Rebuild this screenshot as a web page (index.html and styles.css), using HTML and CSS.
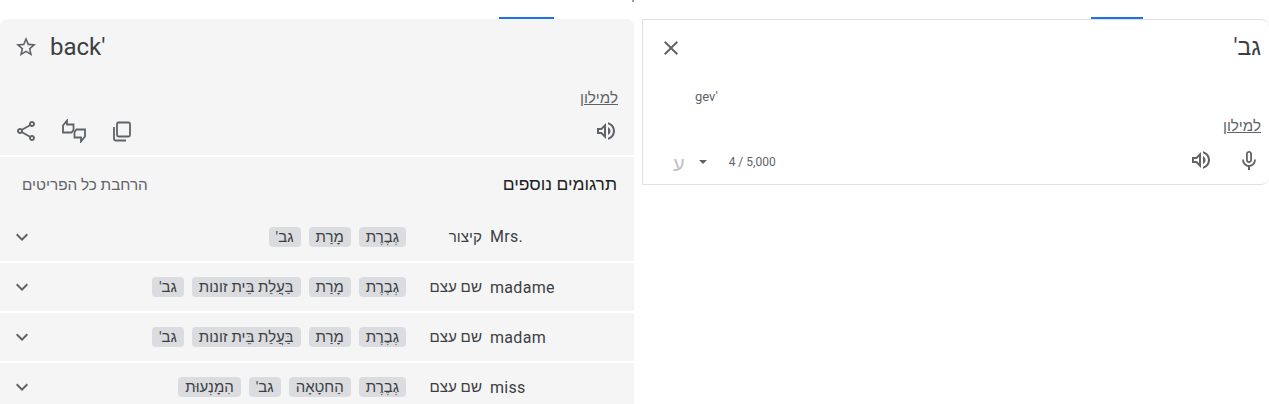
FILE: index.html
```html
<!DOCTYPE html>
<html lang="he" dir="rtl">
<head>
    <meta charset="UTF-8">
    <meta name="viewport" content="width=device-width, initial-scale=1.0">
    <title>Google Translate</title>
    <link rel="stylesheet" href="styles.css">
</head>
<body>
    <span class="top-speck"></span>
    <main class="panels">
        <section class="source">
            <div class="tab-mark"></div>
            <div class="source-card">
                <div class="source-top">
                    <span class="big-text">גב'</span>
                    <svg class="icon close-icon" viewBox="0 0 24 24"><path d="M19 6.41 17.59 5 12 10.59 6.41 5 5 6.41 10.59 12 5 17.59 6.41 19 12 13.41 17.59 19 19 17.59 13.41 12z"/></svg>
                </div>
                <div class="translit">gev'</div>
                <a class="dict-link source-link" href="#">למילון</a>
                <div class="source-tools">
                    <svg class="icon mic" viewBox="0 0 24 24"><path d="M12 15c1.66 0 3-1.31 3-2.97V6c0-1.66-1.34-3-3-3S9 4.34 9 6v6.03C9 13.69 10.34 15 12 15zM10.800 6c0-.66.54-1.200 1.200-1.200s1.200.54 1.200 1.200v6.030c0 .66-.54 1.170-1.200 1.170s-1.200-.51-1.200-1.170V6z"/><path d="M17 11.500v.5c0 2.760-2.240 5-5 5s-5-2.240-5-5v-.5H5.200v.5c0 3.400 2.500 6.200 5.800 6.700V22h2v-3.300c3.300-.5 5.800-3.300 5.800-6.700v-.5z"/></svg>
                    <svg class="icon speaker" viewBox="0 0 24 24"><path d="M3 9v6h4l5 5V4L7 9H3zm7-.17v6.340L7.830 13H5v-2h2.830L10 8.830zM16.500 12c0-1.770-1.020-3.290-2.500-4.030v8.050c1.480-.730 2.500-2.250 2.500-4.020zM14 3.230v2.060c2.890.860 5 3.540 5 6.710s-2.110 5.850-5 6.710v2.060c4.010-.910 7-4.490 7-8.770 0-4.280-2.990-7.860-7-8.770z"/></svg>
                    <span class="count" dir="ltr">4 / 5,000</span>
                    <span class="caret"></span>
                    <span class="keyboard">ע</span>
                </div>
            </div>
        </section>

        <section class="target">
            <div class="tab-mark"></div>
            <div class="result-card">
                <div class="result-top">
                    <span class="big-text" dir="ltr">back'</span>
                    <svg class="icon star" viewBox="0 0 24 24"><path d="m22 9.240-7.190-.620L12 2 9.190 8.630 2 9.240l5.460 4.730L5.820 21 12 17.270 18.180 21l-1.630-7.030L22 9.240zM12 15.400l-3.760 2.270 1-4.280-3.320-2.880 4.380-.380L12 6.100l1.710 4.040 4.380.380-3.320 2.880 1 4.280L12 15.400z"/></svg>
                </div>
                <a class="dict-link result-link" href="#">למילון</a>
                <div class="result-tools">
                    <svg class="icon speaker" viewBox="0 0 24 24"><path d="M3 9v6h4l5 5V4L7 9H3zm7-.17v6.340L7.830 13H5v-2h2.830L10 8.830zM16.500 12c0-1.770-1.020-3.290-2.500-4.030v8.050c1.480-.730 2.500-2.250 2.500-4.020zM14 3.230v2.060c2.890.860 5 3.540 5 6.710s-2.110 5.850-5 6.710v2.060c4.010-.910 7-4.490 7-8.770 0-4.280-2.990-7.860-7-8.770z"/></svg>
                    <div class="result-actions">
                        <svg class="icon" viewBox="0 0 24 24"><path class="line" d="M8.500 3.500h10a1.500 1.500 0 0 1 1.500 1.500v11a1.500 1.500 0 0 1-1.500 1.500h-10A1.500 1.500 0 0 1 7 16V5a1.500 1.500 0 0 1 1.500-1.500zM4 8v12a1.500 1.500 0 0 0 1.500 1.500H16"/></svg>
                        <svg class="icon" viewBox="0 0 24 24"><path class="line" d="M1 13.500V6.500L5 1.500V5.500H11.500V11L9.500 13.500zM23 10.500V17.500L19 22.500V18.500H12.500V13L14.500 10.500z"/></svg>
                        <svg class="icon" viewBox="0 0 24 24"><path d="M18 16.080c-.76 0-1.440.3-1.960.77L8.910 12.700c.05-.23.09-.46.09-.7s-.04-.47-.09-.7l7.050-4.110c.54.5 1.250.81 2.040.81 1.660 0 3-1.340 3-3s-1.340-3-3-3-3 1.340-3 3c0 .24.040.47.090.7L8.040 9.810C7.500 9.310 6.790 9 6 9c-1.660 0-3 1.340-3 3s1.340 3 3 3c.79 0 1.500-.31 2.040-.81l7.120 4.160c-.05.21-.08.43-.08.650 0 1.610 1.310 2.920 2.920 2.920s2.920-1.310 2.920-2.920-1.310-2.920-2.920-2.920zM18 4c.55 0 1 .45 1 1s-.45 1-1 1-1-.45-1-1 .45-1 1-1zM6 13c-.55 0-1-.45-1-1s.45-1 1-1 1 .45 1 1-.45 1-1 1zm12 7.020c-.55 0-1-.45-1-1s.45-1 1-1 1 .45 1 1-.45 1-1 1z"/></svg>
                    </div>
                </div>
            </div>

            <div class="more">
                <div class="more-head">
                    <h2>תרגומים נוספים</h2>
                    <span class="expand-all">הרחבת כל הפריטים</span>
                </div>
                <div class="row row-first">
                    <span class="word" dir="ltr">Mrs.</span>
                    <span class="pos">קיצור</span>
                    <div class="chips"><span class="chip">גְבֶרֶת</span><span class="chip">מָרַת</span><span class="chip">גב'</span></div>
                    <svg class="chevron" viewBox="0 0 24 24"><path d="M7.410 8.590 12 13.170l4.590-4.580L18 10l-6 6-6-6z"/></svg>
                </div>
                <div class="row">
                    <span class="word" dir="ltr">madame</span>
                    <span class="pos">שם עצם</span>
                    <div class="chips"><span class="chip">גְבֶרֶת</span><span class="chip">מָרַת</span><span class="chip">בַּעֲלַת בֵּית זונות</span><span class="chip">גב'</span></div>
                    <svg class="chevron" viewBox="0 0 24 24"><path d="M7.410 8.590 12 13.170l4.590-4.580L18 10l-6 6-6-6z"/></svg>
                </div>
                <div class="row">
                    <span class="word" dir="ltr">madam</span>
                    <span class="pos">שם עצם</span>
                    <div class="chips"><span class="chip">גְבֶרֶת</span><span class="chip">מָרַת</span><span class="chip">בַּעֲלַת בֵּית זונות</span><span class="chip">גב'</span></div>
                    <svg class="chevron" viewBox="0 0 24 24"><path d="M7.410 8.590 12 13.170l4.590-4.580L18 10l-6 6-6-6z"/></svg>
                </div>
                <div class="row">
                    <span class="word" dir="ltr">miss</span>
                    <span class="pos">שם עצם</span>
                    <div class="chips"><span class="chip">גְבֶרֶת</span><span class="chip">הַחטָאָה</span><span class="chip">גב'</span><span class="chip">הִמָנְעוּת</span></div>
                    <svg class="chevron" viewBox="0 0 24 24"><path d="M7.410 8.590 12 13.170l4.590-4.580L18 10l-6 6-6-6z"/></svg>
                </div>
            </div>
        </section>
    </main>
</body>
</html>
```
FILE: styles.css
```css
* {
    box-sizing: border-box;
}
html, body {
    margin: 0;
    padding: 0;
    height: 404px;
    overflow: hidden;
    background: #fff;
}
body {
    font-family: Roboto, "Liberation Sans", sans-serif;
    color: #3c4043;
}
.top-speck {
    position: absolute;
    left: 632px;
    top: 0;
    width: 2px;
    height: 2px;
    background: #9aa0a6;
}
.panels {
    display: flex;
    gap: 8px;
    height: 404px;
    padding-top: 17px;
}
.source {
    width: 627px;
    flex: none;
}
.target {
    width: 634px;
    flex: none;
}
.tab-mark {
    height: 2px;
    background: #1a73e8;
}
.source .tab-mark {
    width: 52px;
    margin-right: 126px;
}
.target .tab-mark {
    width: 55px;
    margin-right: 80px;
}
.icon {
    width: 24px;
    height: 24px;
    fill: #5f6368;
    flex: none;
}
.line {
    fill: none;
    stroke: #5f6368;
    stroke-width: 1.8;
}
.big-text {
    font-size: 24px;
    line-height: 32px;
}
.dict-link {
    font-size: 15.2px;
    line-height: 20px;
    color: #5f6368;
    text-decoration: underline;
}

/* right card */
.source-card {
    height: 166px;
    border: 1px solid #dfe1e5;
    border-right: 0;
    border-radius: 0 8px 8px 0;
    display: flex;
    flex-direction: column;
}
.source-top {
    display: flex;
    justify-content: space-between;
    align-items: center;
    padding: 12px 8px 0 16px;
}
.source-top .big-text {
    font-size: 23px;
}
.translit {
    font-size: 13px;
    line-height: 16px;
    color: #5f6368;
    margin-top: 25px;
    direction: ltr;
    text-align: left;
    padding-left: 52px;
}
.source-link {
    align-self: flex-start;
    margin: 11px 8px 0 0;
}
.source-tools {
    display: flex;
    align-items: center;
    height: 24px;
    margin-top: 12px;
    padding-right: 8px;
}
.source-tools .speaker {
    margin-right: 24px;
}
.count {
    font-size: 12px;
    margin-top: 4px;
    margin-right: auto;
    color: #5f6368;
}
.caret {
    width: 0;
    height: 0;
    border-left: 4px solid transparent;
    border-right: 4px solid transparent;
    border-top: 4px solid #5f6368;
    margin: 4px 22px 0 0;
}
.keyboard {
    font-size: 20px;
    line-height: 24px;
    color: #bdc1c6;
    margin: 8px 14px 0 30px;
}

/* left card */
.result-card {
    height: 136px;
    background: #f5f5f5;
    border-radius: 8px 8px 0 0;
}
.result-top {
    display: flex;
    justify-content: flex-end;
    align-items: center;
    gap: 12px;
    padding: 12px 0 0 14px;
}
.result-link {
    display: block;
    width: max-content;
    margin: 25px 16px 0 0;
}
.result-tools {
    display: flex;
    justify-content: space-between;
    align-items: center;
    padding: 0 16px 0 14px;
    margin-top: 11px;
}
.result-actions {
    display: flex;
    gap: 24px;
}

/* more translations */
.more {
    margin-top: 2px;
}
.more-head {
    height: 55px;
    background: #f5f5f5;
    display: flex;
    justify-content: space-between;
    align-items: center;
    padding: 0 17px 0 22px;
}
.more-head h2 {
    margin: 0;
    font-size: 17.5px;
    font-weight: 500;
    color: #202124;
}
.expand-all {
    font-size: 15.3px;
    color: #5f6368;
}
.row {
    height: 48px;
    background: #f5f5f5;
    margin-top: 2px;
    display: flex;
    align-items: center;
    padding-left: 10px;
    direction: ltr;
    flex-direction: row-reverse;
}
.row-first {
    margin-top: 0;
    height: 49px;
}
.word {
    width: 144px;
    font-size: 16px;
    letter-spacing: .3px;
    text-align: left;
    flex: none;
}
.pos {
    width: 84px;
    padding-right: 8px;
    font-size: 15.2px;
    text-align: right;
    direction: rtl;
    flex: none;
}
.chips {
    display: flex;
    gap: 8px;
    direction: rtl;
    flex: 1;
}
.chip {
    height: 20px;
    line-height: 20px;
    padding: 0 7px;
    background: #dadce0;
    border-radius: 4px;
    font-size: 15px;
    white-space: nowrap;
}
.chevron {
    width: 24px;
    height: 24px;
    fill: #5f6368;
    flex: none;
}
```
